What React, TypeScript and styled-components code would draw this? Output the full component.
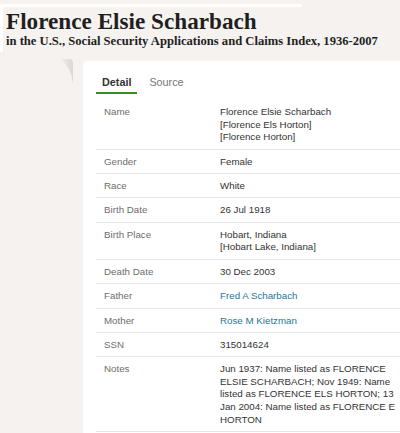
import React from "react";
import styled, { createGlobalStyle } from "styled-components";

const Global = createGlobalStyle`
  html, body { margin: 0; padding: 0; }
  body {
    background: #f5f2ef;
    font-family: "Liberation Sans", Arial, sans-serif;
    overflow: hidden;
  }
`;

const Page = styled.div`
  width: 400px;
  height: 433px;
  overflow: hidden;
`;

const TopRule = styled.div`
  width: 302px;
  height: 3px;
  margin-top: 4px;
  background: #ffffff;
  border-radius: 0 2px 2px 0;
`;

const Header = styled.header`
  border-left: 3px solid #ffffff;
  padding: 2px 0 4px 3px;
  font-family: "Liberation Serif", "Times New Roman", serif;
  color: #1f1f1f;
`;

const Title = styled.h1`
  margin: 0;
  font-size: 23.2px;
  line-height: 25px;
  font-weight: 700;
  white-space: nowrap;
`;

const Subtitle = styled.div`
  font-size: 12.6px;
  line-height: 14px;
  font-weight: 700;
  white-space: nowrap;
`;

const Main = styled.div`
  display: flex;
`;

const Gutter = styled.div`
  width: 83px;
  flex: none;
  padding-top: 4px;
  svg { display: block; margin-left: 58px; }
`;

const Card = styled.section`
  flex: 1;
  margin-top: 9px;
  background: #ffffff;
  border-top-left-radius: 4px;
  padding: 15px 0 0 13px;
  min-height: 380px;
`;

const Tabs = styled.div`
  display: flex;
  gap: 6px;
`;

const Tab = styled.div<{ $active?: boolean }>`
  padding: 0 6px 3px;
  font-size: 10.8px;
  line-height: 13px;
  font-weight: ${(p) => (p.$active ? 700 : 400)};
  color: ${(p) => (p.$active ? "#333333" : "#777777")};
  border-bottom: 2px solid ${(p) => (p.$active ? "#3a8c21" : "transparent")};
`;

const Table = styled.div`
  margin-top: 6px;
`;

const Row = styled.div`
  display: grid;
  grid-template-columns: 124px 1fr;
  padding: 6px 0 4.8px;
  border-bottom: 1px solid #e7e7e7;
  font-size: 9.75px;
  line-height: 12.6px;
`;

const Label = styled.div`
  padding-left: 8px;
  color: #6d6d6d;
`;

const Value = styled.div`
  padding-right: 2px;
  color: #333333;
`;

const Link = styled.a`
  color: #25789b;
  text-decoration: none;
`;

const Curl = () => (
  <svg width="18" height="30" viewBox="0 0 18 30">
    <defs>
      <linearGradient id="curlg" x1="0" y1="0" x2="1" y2="0">
        <stop offset="0" stopColor="#f1efed" />
        <stop offset="1" stopColor="#d9d7d5" />
      </linearGradient>
    </defs>
    <path d="M2,3 L11,3 Q15,3 15,7 L15,28 Q14,12 2,3 Z" fill="url(#curlg)" />
  </svg>
);

type Field = { label: string; lines: string[]; link?: boolean };

const fields: Field[] = [
  {
    label: "Name",
    lines: ["Florence Elsie Scharbach", "[Florence Els Horton]", "[Florence Horton]"],
  },
  { label: "Gender", lines: ["Female"] },
  { label: "Race", lines: ["White"] },
  { label: "Birth Date", lines: ["26 Jul 1918"] },
  { label: "Birth Place", lines: ["Hobart, Indiana", "[Hobart Lake, Indiana]"] },
  { label: "Death Date", lines: ["30 Dec 2003"] },
  { label: "Father", lines: ["Fred A Scharbach"], link: true },
  { label: "Mother", lines: ["Rose M Kietzman"], link: true },
  { label: "SSN", lines: ["315014624"] },
  {
    label: "Notes",
    lines: [
      "Jun 1937: Name listed as FLORENCE ELSIE SCHARBACH; Nov 1949: Name listed as FLORENCE ELS HORTON; 13 Jan 2004: Name listed as FLORENCE E HORTON",
    ],
  },
];

export default function App() {
  return (
    <Page>
      <Global />
      <TopRule />
      <Header>
        <Title>Florence Elsie Scharbach</Title>
        <Subtitle>in the U.S., Social Security Applications and Claims Index, 1936-2007</Subtitle>
      </Header>
      <Main>
        <Gutter>
          <Curl />
        </Gutter>
        <Card>
          <Tabs>
            <Tab $active>Detail</Tab>
            <Tab>Source</Tab>
          </Tabs>
          <Table>
            {fields.map((f) => (
              <Row key={f.label}>
                <Label>{f.label}</Label>
                <Value>
                  {f.lines.map((l, i) => (
                    <div key={i}>{f.link ? <Link href="#">{l}</Link> : l}</div>
                  ))}
                </Value>
              </Row>
            ))}
          </Table>
        </Card>
      </Main>
    </Page>
  );
}
